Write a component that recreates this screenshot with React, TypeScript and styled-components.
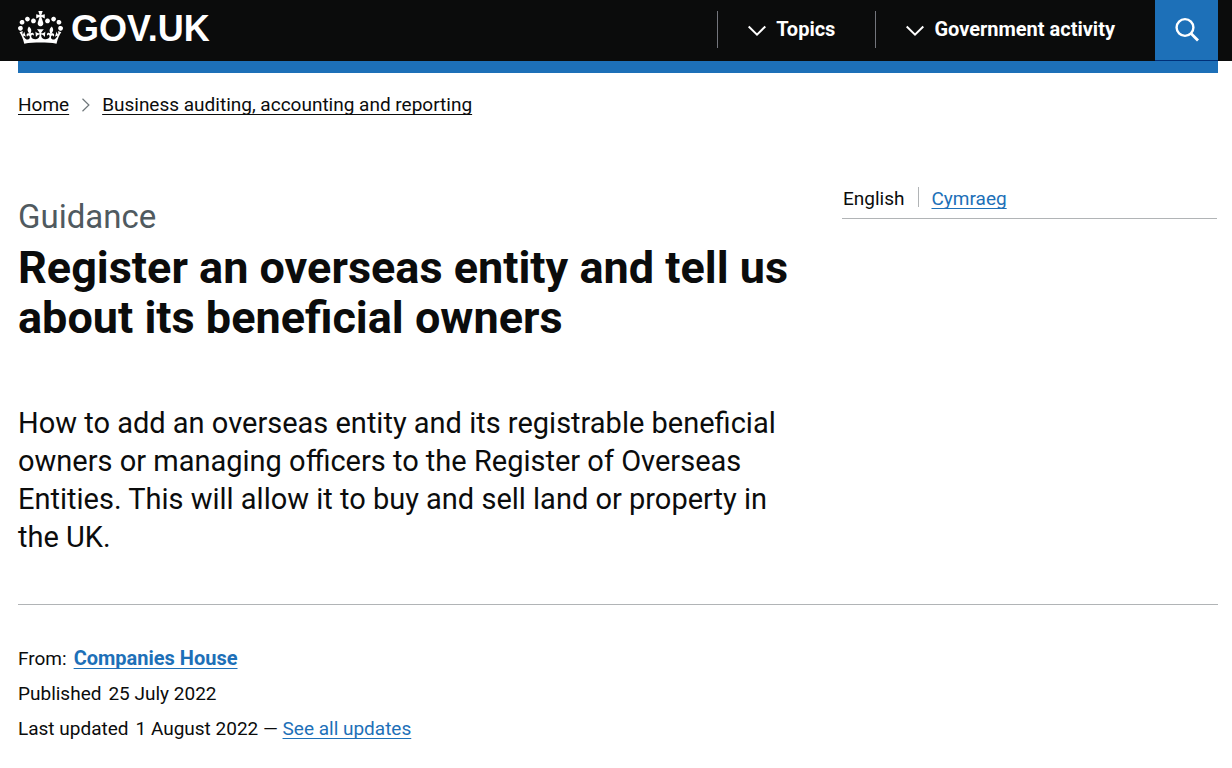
import React from 'react';
import styled, { createGlobalStyle } from 'styled-components';

const ink = '#0b0c0c';
const blue = '#1d70b8';
const line = '#b1b4b6';

const GlobalStyle = createGlobalStyle`
  *, *::before, *::after { box-sizing: border-box; }
  body {
    margin: 0;
    background: #fff;
    color: ${ink};
    font-family: Roboto, "Liberation Sans", sans-serif;
    font-size: 19px;
    line-height: 24px;
  }
`;

const Container = styled.div`
  max-width: 1232px;
  margin: 0 auto;
  padding: 0 14px 0 18px;
`;

const Header = styled.header`
  background: ${ink};
`;

const HeaderRow = styled.div`
  display: flex;
  align-items: flex-start;
  height: 61px;
`;

const LogoLink = styled.a`
  display: flex;
  align-items: flex-start;
  gap: 8px;
  margin-top: 11px;
  color: #fff;
  font-family: "Liberation Sans", sans-serif;
  font-size: 36px;
  line-height: 36px;
  font-weight: 700;
  text-decoration: none;
`;

const HeaderNav = styled.nav`
  display: flex;
  margin-left: auto;
`;

const MenuButton = styled.button`
  display: flex;
  align-items: center;
  gap: 10px;
  height: 37px;
  margin: 11px 0 0;
  padding: 0 40px 1px 30px;
  border: 0;
  border-left: 1px solid #73757c;
  background: none;
  color: #fff;
  font: inherit;
  font-size: 20px;
  font-weight: 700;
  cursor: pointer;
`;

const SearchButton = styled.button`
  display: flex;
  align-items: center;
  justify-content: center;
  width: 63px;
  height: 61px;
  padding: 0;
  border: 0;
  border-bottom: 1px solid #003078;
  background: ${blue};
  cursor: pointer;
`;

const BlueBar = styled.div`
  height: 12px;
  background: ${blue};
`;

const BreadcrumbList = styled.ol`
  display: flex;
  align-items: center;
  gap: 12px;
  margin: 20px 0 0;
  padding: 0;
  list-style: none;
`;

const Crumb = styled.li`
  display: flex;
  align-items: center;
  gap: 12px;
`;

const Link = styled.a<{ $plain?: boolean; $strong?: boolean }>`
  color: ${(p) => (p.$plain ? ink : blue)};
  font-size: ${(p) => (p.$strong ? '20px' : 'inherit')};
  font-weight: ${(p) => (p.$strong ? 700 : 400)};
  text-decoration: underline;
  text-decoration-thickness: 1px;
  text-underline-offset: 3px;
  text-decoration-skip-ink: none;
`;

const TitleGrid = styled.div`
  display: grid;
  grid-template-columns: 2fr 1fr;
  column-gap: 24px;
  margin-top: 70px;
`;

const Caption = styled.p`
  margin: 11px 0 0;
  color: #505a5f;
  font-size: 33px;
  line-height: 38px;
`;

const Title = styled.h1`
  margin: 7px 0 0;
  font-size: 45px;
  line-height: 50px;
  font-weight: 700;
`;

const Lead = styled.p`
  margin: 61px 0 0;
  font-size: 29px;
  line-height: 38px;
`;

const LanguageList = styled.ul`
  display: flex;
  align-items: flex-start;
  margin: 0 1px 0 16px;
  padding: 0 0 11px;
  border-bottom: 1px solid ${line};
  list-style: none;
`;

const Language = styled.li`
  padding: 0 14px 0 1px;
  height: 20px;

  & + & {
    padding: 0 0 0 12px;
    border-left: 1px solid ${line};
  }
`;

const Metadata = styled.dl`
  margin: 48px 0 0;
  padding: 36px 0 30px;
  border-top: 1px solid ${line};
  line-height: 35px;
`;

const MetaRow = styled.div`
  display: flex;
  gap: 7px;
  height: 35px;
`;

const Term = styled.dt``;

const Detail = styled.dd`
  margin: 0;
`;

function Crown() {
  return (
    <svg width="45" height="33" viewBox="0 0 132 97" fill="currentColor" aria-hidden="true">
      <path d="M25 30.2c3.5 1.5 7.7-.2 9.1-3.7 1.5-3.6-.2-7.8-3.9-9.2-3.6-1.4-7.6.3-9.1 3.9-1.4 3.5.3 7.5 3.9 9zM9 39.5c3.6 1.5 7.8-.2 9.2-3.7 1.5-3.6-.2-7.8-3.9-9.1-3.6-1.5-7.6.2-9.1 3.8-1.4 3.5.3 7.5 3.8 9zM4.4 57.2c3.5 1.5 7.7-.2 9.1-3.8 1.5-3.6-.2-7.7-3.9-9.1-3.5-1.5-7.6.3-9.1 3.8-1.4 3.5.3 7.6 3.9 9.1zm38.3-21.4c3.5 1.5 7.7-.2 9.1-3.8 1.5-3.6-.2-7.7-3.9-9.1-3.6-1.5-7.6.3-9.1 3.8-1.3 3.6.4 7.7 3.9 9.1zm64.4-5.6c-3.6 1.5-7.8-.2-9.1-3.7-1.5-3.6.2-7.8 3.8-9.2 3.6-1.4 7.7.3 9.2 3.9 1.3 3.5-.4 7.5-3.9 9zm15.9 9.3c-3.6 1.5-7.7-.2-9.1-3.7-1.5-3.6.2-7.8 3.7-9.1 3.6-1.5 7.7.2 9.2 3.8 1.5 3.5-.3 7.5-3.8 9zm4.7 17.7c-3.6 1.5-7.8-.2-9.2-3.8-1.5-3.6.2-7.7 3.9-9.1 3.6-1.5 7.7.3 9.2 3.8 1.3 3.5-.4 7.6-3.9 9.1zM89.3 35.8c-3.6 1.5-7.8-.2-9.2-3.8-1.4-3.6.2-7.7 3.9-9.1 3.6-1.5 7.7.3 9.2 3.8 1.4 3.6-.3 7.7-3.9 9.1zM69.7 17.7l8.9 4.7V9.3l-8.9 2.8c-.2-.3-.5-.6-.9-.9L72.4 0H59.6l3.5 11.2c-.3.3-.6.5-.9.9l-8.8-2.8v13.1l8.8-4.7c.3.3.6.7.9.9l-5 15.4v.1c-.2.8-.4 1.6-.4 2.4 0 4.1 3.1 7.5 7 8.1h.2c.3 0 .7.1 1 .1.4 0 .7 0 1-.1h.2c4-.6 7.1-4.1 7.1-8.1 0-.8-.1-1.7-.4-2.4V34l-5.1-15.4c.4-.2.7-.6 1-.9zM66 92.8c16.9 0 32.8 1.1 47.1 3.2 4-16.9 8.9-26.7 14-33.5l-9.6-3.4c1 4.9 1.1 7.2 0 10.2-1.5-1.4-3-4.3-4.2-8.7L108.6 76c2.8-2 5-3.2 7.5-3.3-4.4 9.4-10 11.9-13.6 11.2-4.3-.8-6.3-4.6-5.6-7.9 1-4.7 5.7-5.9 8-.5 4.3-8.7-3-11.4-7.6-8.8 7.1-7.2 7.9-13.5 2.1-21.1-8 6.1-8.1 12.3-4.5 20.8-4.7-5.4-12.1-2.5-9.5 6.2 3.4-5.2 7.9-2 7.2 3.1-.6 4.3-6.4 7.8-13.5 7.2-10.3-.9-10.9-8-11.2-13.8 2.5-.5 7.1 1.8 11 7.3L80.2 60c-4.1 4.4-8 5.3-12.3 5.4 1.4-4.4 8-11.6 8-11.6H55.5s6.4 7.2 7.9 11.6c-4.2-.1-8-1-12.3-5.4l1.4 16.4c3.9-5.5 8.5-7.7 10.9-7.3-.3 5.8-.9 12.8-11.1 13.8-7.2.6-12.9-2.9-13.5-7.2-.7-5 3.8-8.3 7.1-3.1 2.7-8.7-4.6-11.6-9.4-6.2 3.7-8.5 3.6-14.7-4.6-20.8-5.8 7.6-5 13.9 2.2 21.1-4.7-2.6-11.9.1-7.7 8.8 2.3-5.5 7.1-4.2 8.1.5.7 3.3-1.3 7.1-5.7 7.9-3.5.7-9-1.8-13.5-11.2 2.5.1 4.7 1.3 7.5 3.3l-4.7-15.4c-1.2 4.4-2.7 7.2-4.3 8.7-1.1-3-.9-5.3 0-10.2l-9.5 3.4c5 6.9 9.9 16.7 14 33.5 14.8-2.1 30.8-3.2 47.7-3.2z" />
    </svg>
  );
}

function ChevronDown() {
  return (
    <svg width="18" height="14" viewBox="0 0 18 14" fill="none" stroke="#fff" strokeWidth="2" aria-hidden="true">
      <path d="M0.7 4.5 9 12.6 17.3 4.5" />
    </svg>
  );
}

function ChevronRight() {
  return (
    <svg width="9" height="14" viewBox="0 0 9 14" fill="none" stroke="#6f777b" strokeWidth="1.2" aria-hidden="true">
      <path d="M1.5 0.8 7.9 7 1.5 13.2" />
    </svg>
  );
}

function SearchIcon() {
  return (
    <svg width="26" height="26" viewBox="0 0 26 26" fill="none" stroke="#fff" strokeWidth="2.4" aria-hidden="true">
      <circle cx="11" cy="10.5" r="8.4" />
      <path d="M16.8 16.3 24 23.5" strokeWidth="2.8" />
    </svg>
  );
}

export default function App() {
  return (
    <>
      <GlobalStyle />
      <Header>
        <Container>
          <HeaderRow>
            <LogoLink href="#" aria-label="GOV.UK">
              <Crown />
              GOV.UK
            </LogoLink>
            <HeaderNav aria-label="Main">
              <MenuButton type="button">
                <ChevronDown />
                Topics
              </MenuButton>
              <MenuButton type="button">
                <ChevronDown />
                Government activity
              </MenuButton>
              <SearchButton type="button" aria-label="Search GOV.UK">
                <SearchIcon />
              </SearchButton>
            </HeaderNav>
          </HeaderRow>
        </Container>
      </Header>
      <Container>
        <BlueBar />
        <nav aria-label="Breadcrumb">
          <BreadcrumbList>
            <Crumb>
              <Link href="#" $plain>Home</Link>
            </Crumb>
            <Crumb>
              <ChevronRight />
              <Link href="#" $plain>Business auditing, accounting and reporting</Link>
            </Crumb>
          </BreadcrumbList>
        </nav>
        <main>
          <TitleGrid>
            <div>
              <Caption>Guidance</Caption>
              <Title>Register an overseas entity and tell us about its beneficial owners</Title>
              <Lead>
                How to add an overseas entity and its registrable beneficial owners or managing
                officers to the Register of Overseas Entities. This will allow it to buy and sell
                land or property in the UK.
              </Lead>
            </div>
            <nav aria-label="Translations">
              <LanguageList>
                <Language>English</Language>
                <Language>
                  <Link href="#" lang="cy">Cymraeg</Link>
                </Language>
              </LanguageList>
            </nav>
          </TitleGrid>
          <Metadata>
            <MetaRow>
              <Term>From:</Term>
              <Detail>
                <Link href="#" $strong>Companies House</Link>
              </Detail>
            </MetaRow>
            <MetaRow>
              <Term>Published</Term>
              <Detail>25 July 2022</Detail>
            </MetaRow>
            <MetaRow>
              <Term>Last updated</Term>
              <Detail>
                1 August 2022 — <Link href="#">See all updates</Link>
              </Detail>
            </MetaRow>
          </Metadata>
        </main>
      </Container>
    </>
  );
}
